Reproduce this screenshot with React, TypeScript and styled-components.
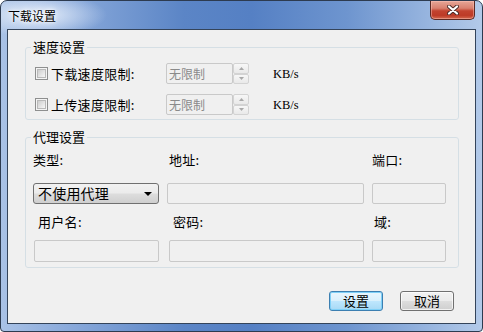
import React from "react";
import styled, { createGlobalStyle } from "styled-components";

const GlobalStyle = createGlobalStyle`
  html, body {
    margin: 0;
    padding: 0;
    background: #ffffff;
  }
  body {
    font-family: "Noto Sans CJK SC", "Liberation Sans", sans-serif;
    color: #000;
  }
`;

const Window = styled.div`
  width: 483px;
  height: 332px;
  box-sizing: border-box;
  display: flex;
  flex-direction: column;
  border: 1px solid #2d3b50;
  border-radius: 7px 7px 4px 4px;
  overflow: hidden;
  background:
    radial-gradient(ellipse 70px 22px at 36px 14px, rgba(235, 242, 252, 0.95), rgba(235, 242, 252, 0) 100%),
    linear-gradient(90deg, #a9c2e6 0%, #8aaadb 14%, #5b85c6 38%, #5580c4 52%, #6e95cf 72%, #9ab7e0 90%, #b3cae9 100%);
`;

const TitleBar = styled.div`
  flex: none;
  height: 28px;
  display: flex;
  align-items: flex-start;
  justify-content: space-between;
  padding: 0 7px 0 7px;
`;

const TitleText = styled.div`
  margin-top: 6px;
  font-size: 12px;
  line-height: 17px;
  color: #000;
  text-shadow: 0 0 6px #fff, 0 0 3px #fff;
`;

const CloseButton = styled.div`
  width: 45px;
  height: 19px;
  box-sizing: border-box;
  display: flex;
  align-items: center;
  justify-content: center;
  border: 1px solid #5b2a24;
  border-top: none;
  border-radius: 0 0 5px 5px;
  background: linear-gradient(180deg, #e6a697 0%, #d9806f 40%, #c2432f 55%, #bd3b27 80%, #d46a4f 100%);
  box-shadow: inset 0 0 0 1px rgba(255, 200, 190, 0.45);
`;

const Client = styled.div`
  flex: 1;
  margin: 0 6px 7px 6px;
  border: 1px solid #34445a;
  background: #f0f0f0;
  display: flex;
  flex-direction: column;
  padding: 9px 16px 0 17px;
`;

const Group = styled.fieldset<{ $gapTop?: number }>`
  margin: ${(p) => p.$gapTop ?? 0}px 0 0 0;
  padding: 0;
  min-width: 0;
  border: 1px solid #d5dfe5;
  border-radius: 3px;
`;

const Legend = styled.legend`
  margin-left: 5px;
  padding: 0 2px;
  font-size: 13px;
  line-height: 16px;
`;

const GroupBody = styled.div<{ $pad: string }>`
  display: flex;
  flex-direction: column;
  padding: ${(p) => p.$pad};
`;

const SpeedRow = styled.div<{ $top?: number }>`
  display: flex;
  align-items: center;
  height: 21px;
  margin-top: ${(p) => p.$top ?? 0}px;
`;

const CheckBox = styled.span`
  flex: none;
  width: 13px;
  height: 13px;
  box-sizing: border-box;
  border: 1px solid #8e8f8f;
  background: #f4f4f4;
  display: flex;
  align-items: center;
  justify-content: center;

  &::after {
    content: "";
    width: 9px;
    height: 9px;
    box-sizing: border-box;
    border: 1px solid #b9b9b9;
    background: linear-gradient(135deg, #cdcdcd 0%, #e6e6e6 60%, #f7f7f7 100%);
  }
`;

const CheckLabel = styled.span`
  flex: none;
  width: 115px;
  margin-left: 3px;
  font-size: 13px;
  line-height: 16px;
  letter-spacing: 0.3px;
`;

const Spin = styled.div`
  flex: none;
  display: flex;
  height: 21px;
`;

const SpinField = styled.div`
  width: 67px;
  box-sizing: border-box;
  border: 1px solid #c9c9c9;
  border-radius: 2px;
  background: #f0f0f0;
  color: #8a8a8a;
  font-size: 12px;
  line-height: 19px;
  padding-left: 2px;
`;

const SpinButtons = styled.div`
  width: 16px;
  display: flex;
  flex-direction: column;
`;

const SpinButton = styled.div`
  flex: 1;
  box-sizing: border-box;
  border: 1px solid #d3d3d3;
  border-radius: 2px;
  background: linear-gradient(180deg, #f7f7f7, #e9e9e9);
  display: flex;
  align-items: center;
  justify-content: center;
`;

const Unit = styled.span`
  margin-left: 24px;
  font-family: "Liberation Serif", serif;
  font-size: 12.5px;
  line-height: 16px;
`;

const FieldRow = styled.div<{ $top?: number }>`
  display: grid;
  grid-template-columns: 126px 197px 74px;
  column-gap: 8px;
  margin-top: ${(p) => p.$top ?? 0}px;
`;

const FieldLabel = styled.span<{ $indent?: number }>`
  font-size: 13px;
  line-height: 16px;
  letter-spacing: 0.3px;
  padding-left: ${(p) => p.$indent ?? 0}px;
`;

const TextBox = styled.div<{ $h: number; $indent?: number }>`
  height: ${(p) => p.$h}px;
  box-sizing: border-box;
  margin-left: ${(p) => p.$indent ?? 0}px;
  border: 1px solid #c9c9c9;
  border-radius: 2px;
  background: #f0f0f0;
`;

const Combo = styled.div`
  height: 21px;
  box-sizing: border-box;
  display: flex;
  align-items: center;
  justify-content: space-between;
  padding: 0 6px 0 4px;
  border: 1px solid #707070;
  border-radius: 3px;
  background: linear-gradient(180deg, #f2f2f2 0%, #ebebeb 48%, #dddddd 52%, #cfcfcf 100%);
  font-size: 14px;
  line-height: 17px;
  letter-spacing: 0.2px;
`;

const Arrow = styled.span`
  width: 0;
  height: 0;
  border-left: 4px solid transparent;
  border-right: 4px solid transparent;
  border-top: 4px solid #000;
`;

const ButtonRow = styled.div`
  display: flex;
  justify-content: flex-end;
  gap: 17px;
  margin-top: 23px;
  padding-right: 5px;
`;

const DialogButton = styled.div<{ $primary?: boolean }>`
  width: 54px;
  height: 20px;
  box-sizing: border-box;
  display: flex;
  align-items: center;
  justify-content: center;
  border-radius: 3px;
  font-size: 13px;
  line-height: 16px;
  border: 1px solid ${(p) => (p.$primary ? "#3c7fb1" : "#707070")};
  background: ${(p) =>
    p.$primary
      ? "linear-gradient(180deg, #eaf6fd 0%, #d9f0fc 48%, #bee6fd 52%, #a7d9f5 100%)"
      : "linear-gradient(180deg, #f2f2f2 0%, #ebebeb 48%, #dddddd 52%, #cfcfcf 100%)"};
  box-shadow: ${(p) =>
    p.$primary ? "inset 0 0 0 1px #7fd0f7" : "inset 0 0 0 1px rgba(255,255,255,0.7)"};
`;

const SpinArrow = ({ up }: { up?: boolean }) => (
  <svg width="5" height="3" viewBox="0 0 5 3">
    <path d={up ? "M0 3 L2.5 0 L5 3 Z" : "M0 0 L2.5 3 L5 0 Z"} fill="#a8a8a8" />
  </svg>
);

const SpinBox = () => (
  <Spin>
    <SpinField>无限制</SpinField>
    <SpinButtons>
      <SpinButton>
        <SpinArrow up />
      </SpinButton>
      <SpinButton>
        <SpinArrow />
      </SpinButton>
    </SpinButtons>
  </Spin>
);

const CloseGlyph = () => (
  <svg width="12" height="10" viewBox="0 0 12 10">
    <path d="M2 1.5 L10 8.5 M10 1.5 L2 8.5" stroke="#4a2a26" strokeWidth="4" strokeLinecap="round" />
    <path d="M2 1.5 L10 8.5 M10 1.5 L2 8.5" stroke="#ffffff" strokeWidth="2.2" strokeLinecap="round" />
  </svg>
);

const App = (): JSX.Element => {
  return (
    <>
      <GlobalStyle />
      <Window>
        <TitleBar>
          <TitleText>下载设置</TitleText>
          <CloseButton>
            <CloseGlyph />
          </CloseButton>
        </TitleBar>
        <Client>
          <Group>
            <Legend>速度设置</Legend>
            <GroupBody $pad="8px 9px 4px 9px">
              <SpeedRow>
                <CheckBox />
                <CheckLabel>下载速度限制:</CheckLabel>
                <SpinBox />
                <Unit>KB/s</Unit>
              </SpeedRow>
              <SpeedRow $top={10}>
                <CheckBox />
                <CheckLabel>上传速度限制:</CheckLabel>
                <SpinBox />
                <Unit>KB/s</Unit>
              </SpeedRow>
            </GroupBody>
          </Group>
          <Group $gapTop={9}>
            <Legend>代理设置</Legend>
            <GroupBody $pad="7px 7px 5px 7px">
              <FieldRow>
                <FieldLabel>类型:</FieldLabel>
                <FieldLabel $indent={2}>地址:</FieldLabel>
                <FieldLabel>端口:</FieldLabel>
              </FieldRow>
              <FieldRow $top={15}>
                <Combo>
                  <span>不使用代理</span>
                  <Arrow />
                </Combo>
                <TextBox $h={21} />
                <TextBox $h={21} />
              </FieldRow>
              <FieldRow $top={10}>
                <FieldLabel $indent={5}>用户名:</FieldLabel>
                <FieldLabel $indent={6}>密码:</FieldLabel>
                <FieldLabel $indent={2}>域:</FieldLabel>
              </FieldRow>
              <FieldRow $top={10}>
                <TextBox $h={22} $indent={1} />
                <TextBox $h={22} $indent={2} />
                <TextBox $h={22} />
              </FieldRow>
            </GroupBody>
          </Group>
          <ButtonRow>
            <DialogButton $primary>设置</DialogButton>
            <DialogButton>取消</DialogButton>
          </ButtonRow>
        </Client>
      </Window>
    </>
  );
};

export default App;
